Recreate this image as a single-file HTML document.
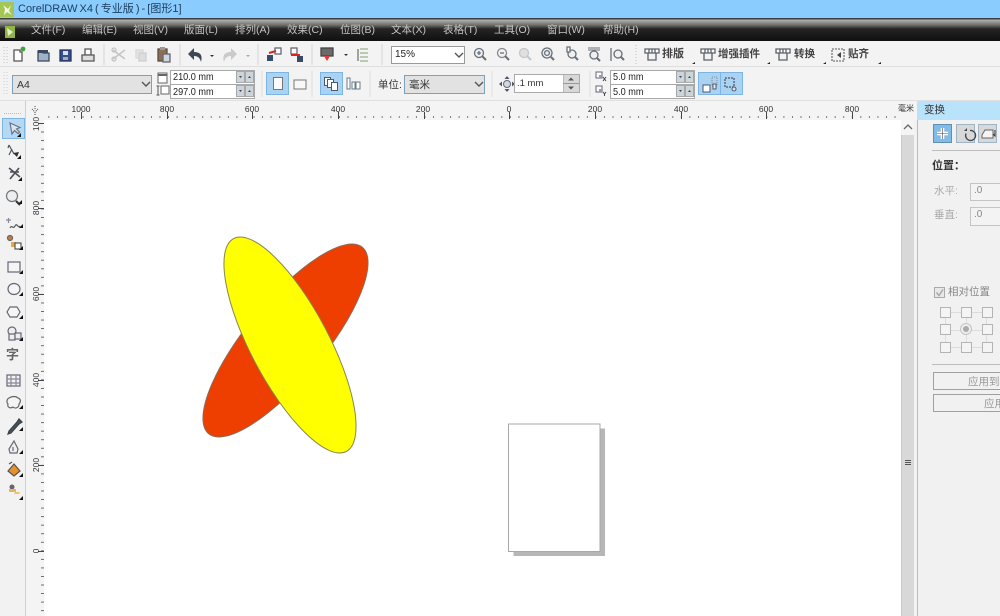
<!DOCTYPE html>
<html><head><meta charset="utf-8"><style>
html,body{margin:0;padding:0;width:1000px;height:616px;overflow:hidden;background:#fff}
#w{position:absolute;left:0;top:0;width:1000px;height:616px;overflow:hidden;filter:blur(.35px);font-family:"Liberation Sans","Noto Sans CJK SC",sans-serif;font-size:11px;color:#333}
#w div,#w span,#w svg{position:absolute;box-sizing:border-box}
.t{white-space:nowrap;line-height:14px}
.m{color:#c4c4c4;top:23px;font-size:10.5px}
.bx{background:#fff;border:1px solid #a0a0a0}
.sel{background:#a9d2f3;border:1px solid #7db5e2}
.n{font-size:10.5px;color:#222;transform:scaleX(.87);transform-origin:0 50%}
.r{font-size:8.5px;top:102px;color:#333;transform:translateX(-50%)}
.rv{font-size:8.5px;left:36px;color:#333;transform:translate(-50%,-50%) rotate(-90deg)}
.d{color:#aaa}
.g{width:11px;height:11px;border:1px solid #b4b4b4;background:#f4f4f4}
.b{font-weight:bold;color:#444;font-size:10.5px;top:47px}
</style></head><body><div id="w">
<div style="left:0;top:0;width:1000px;height:18px;background:#8accfe"></div>
<svg style="left:0;top:2px" width="14" height="15"><rect width="14" height="15" fill="#a3c655"/><path d="M3 3l5 4 3-4-2 6 3 4-5-3-3 3 1-6z" fill="#f3f8e4"/></svg>
<div class="t" style="left:18px;top:2px;font-size:11px;word-spacing:-1px;color:#1c3d5c">CorelDRAW X4 ( 专业版 ) - [图形1]</div>

<div style="left:0;top:18px;width:1000px;height:23px;background:linear-gradient(#3c3f44 0,#3c3f44 1px,#b0b0ac 2px,#6e6e6a 7px,#242424 11px,#0f0f0f 23px)"></div>
<svg style="left:5px;top:26px" width="10" height="12"><rect width="10" height="12" fill="#8fb544"/><path d="M2 2l6 4-5 4z" fill="#e4f0c4"/></svg>
<span class="t m" style="left:31px">文件(F)</span><span class="t m" style="left:82px">编辑(E)</span><span class="t m" style="left:133px">视图(V)</span><span class="t m" style="left:184px">版面(L)</span><span class="t m" style="left:235px">排列(A)</span><span class="t m" style="left:287px">效果(C)</span><span class="t m" style="left:340px">位图(B)</span><span class="t m" style="left:391px">文本(X)</span><span class="t m" style="left:443px">表格(T)</span><span class="t m" style="left:494px">工具(O)</span><span class="t m" style="left:547px">窗口(W)</span><span class="t m" style="left:603px">帮助(H)</span>

<div style="left:0;top:41px;width:1000px;height:60px;background:#f3f3f3"></div>
<div style="left:0;top:66px;width:1000px;height:1px;background:#dedede"></div>
<div style="left:0;top:100px;width:1000px;height:1px;background:#e0e0e0"></div>

<svg style="left:0;top:41px" width="1000" height="26" fill="none" stroke-width="1.300">
<path d="M4 6v18M7 6v18" stroke="#ccc" stroke-dasharray="1 2"/>
<path d="M14 9h6v2h2v9h-8z" fill="#fff" stroke="#555"/><circle cx="23" cy="8" r="2.400" fill="#3da53a"/>
<path d="M38 10h4l1 2h6v8H38z" fill="#9fb2c6" stroke="#394a5e"/><path d="M38 9h10v3H38z" fill="#394a5e"/>
<rect x="60" y="9" width="11" height="11" fill="#33518f" stroke="#27355e"/><rect x="63" y="10" width="5" height="4" fill="#d8e0ee"/><rect x="63" y="16" width="5" height="3" fill="#aab"/>
<path d="M85 8h6v6h-6z" fill="#fff" stroke="#555"/><path d="M82 14h12v6H82z" fill="#ddd" stroke="#555"/>
<path d="M104 3v21" stroke="#dcdcdc"/>
<path d="M113 9l12 9M113 18l12-9" stroke="#c4c4c4" stroke-width="1.500"/><circle cx="114" cy="9" r="2" stroke="#c4c4c4"/><circle cx="114" cy="18" r="2" stroke="#c4c4c4"/>
<rect x="136" y="9" width="7" height="8" fill="#e4e4e4" stroke="#d8d8d8"/><rect x="139" y="12" width="7" height="8" fill="#ddd" stroke="#d0d0d0"/>
<rect x="158" y="8" width="9" height="12" fill="#8a6f55" stroke="#5f4c3b"/><rect x="163" y="13" width="7" height="8" fill="#cfd6dc" stroke="#667"/><rect x="160" y="6" width="5" height="3" fill="#999"/>
<path d="M180 3v21" stroke="#dcdcdc"/>
<path d="M188 13l6-6v4c6 0 9 3 7 10-1-4-3-6-7-6v4z" fill="#3f4956"/><path d="M210 14h4l-2 2z" fill="#333"/>
<path d="M237 13l-6-6v4c-6 0-9 3-7 10 1-4 3-6 7-6v4z" fill="#cacaca"/><path d="M246 14h4l-2 2z" fill="#aaa"/>
<path d="M258 3v21" stroke="#dcdcdc"/>
<rect x="267" y="14" width="6" height="6" fill="#3a4a6a"/><rect x="275" y="7" width="6" height="6" fill="#fff" stroke="#667"/><path d="M269 12l7-2" stroke="#d22" stroke-width="2"/>
<rect x="291" y="7" width="6" height="6" fill="#fff" stroke="#667"/><rect x="297" y="15" width="6" height="6" fill="#3a4a6a"/><path d="M291 14h9" stroke="#d22" stroke-width="2"/>
<path d="M312 3v21" stroke="#dcdcdc"/>
<rect x="321" y="7" width="12" height="8" fill="#6a6a6a" stroke="#444"/><path d="M324 15h6l-3 5z" fill="#e33"/><path d="M344 13h4l-2 2z" fill="#333"/>
<path d="M360 8h8M360 12h8M360 16h8M360 20h8" stroke="#9ab08a" stroke-width="1.300"/><path d="M358 8v12" stroke="#777"/>
<path d="M382 3v21" stroke="#dcdcdc"/>
<g stroke="#6a7078"><circle cx="479" cy="12" r="4.500" fill="#eaf0f5"/><path d="M482 15l4 4" stroke-width="2"/><path d="M477 12h4M479 10v4"/>
<circle cx="502" cy="12" r="4.500" fill="#f2f2f2" stroke="#888"/><path d="M505 15l4 4" stroke-width="2"/><path d="M500 12h4"/></g>
<g stroke="#c4c8c8"><circle cx="524" cy="12" r="4.500" fill="#e0e0e0"/><path d="M527 15l4 4" stroke-width="2"/></g>
<g stroke="#6a7078"><circle cx="547" cy="12" r="5" fill="#eaeef2"/><circle cx="547" cy="12" r="2.400"/><path d="M551 16l3 3" stroke-width="2"/>
<circle cx="572" cy="13" r="4" fill="#f0f0f0"/><path d="M567 6h3v5h-3z" fill="#fff"/><path d="M575 16l3 3" stroke-width="2"/>
<circle cx="594" cy="14" r="4" fill="#f0f0f0"/><path d="M588 7h12M588 9h12" stroke-width="1"/><path d="M597 17l3 3" stroke-width="2"/>
<path d="M611 7v13"/><circle cx="618" cy="13" r="4" fill="#f0f0f0"/><path d="M621 16l3 3" stroke-width="2"/></g>
<path d="M636 4v19" stroke="#ccc" stroke-dasharray="1 2"/>
<g stroke="#5c6268"><path d="M645 8h14v4h-14z" fill="#fff"/><path d="M648 12v7h8v-7M649 8v4M652 8v4M655 8v4"/>
<path d="M701 8h14v4h-14z" fill="#fff"/><path d="M704 12v7h8v-7M705 8v4M708 8v4M711 8v4"/>
<path d="M776 8h14v4h-14z" fill="#fff"/><path d="M779 12v7h8v-7M780 8v4M783 8v4M786 8v4"/></g>
<rect x="832" y="8" width="12" height="12" stroke="#777" stroke-dasharray="2 1"/><path d="M841 11l-4 3 4 3z" fill="#444"/>
<path d="M692 23l3-2v2zM767 23l3-2v2zM823 23l3-2v2zM878 23l3-2v2z" fill="#222"/>
</svg>
<div class="bx" style="left:391px;top:46px;width:74px;height:18px;border-color:#999"></div>
<span class="t" style="left:395px;top:48px;color:#222;font-size:10px">15%</span>
<svg style="left:454px;top:51px" width="10" height="8" fill="none"><path d="M1 2l4 4 4-4" stroke="#555" stroke-width="1.400"/></svg>
<span class="t b" style="left:662px;font-size:11px">排版</span>
<span class="t b" style="left:718px">增强插件</span>
<span class="t b" style="left:794px">转换</span>
<span class="t b" style="left:848px">贴齐</span>

<svg style="left:0;top:67px" width="1000" height="34" fill="none">
<path d="M4 5v24M7 5v24" stroke="#ccc" stroke-dasharray="1 2"/>
<rect x="158" y="6" width="9" height="10" fill="#fff" stroke="#666"/><path d="M158 8h9" stroke="#666" stroke-width="2"/>
<path d="M158 19v9M156.500 19h3M156.500 28h3" stroke="#555"/><rect x="161" y="19" width="8" height="8" fill="#fff" stroke="#666"/>
<path d="M262 4v26M312 4v26M370 4v26M492 4v26M590 4v26" stroke="#dcdcdc"/>
<rect x="294" y="13" width="12" height="9" fill="#f8f8f8" stroke="#777"/>
<path d="M347 11h3v11h-3zM352 15h3v7h-3zM356 15h4v7h-4z" stroke="#6a7a8a" fill="#fff"/>
<circle cx="507" cy="17" r="3.500" fill="#cfd8e4" stroke="#667"/><path d="M507 9l-2.500 3h5zM507 25l-2.500-3h5zM499 17l3-2.500v5zM515 17l-3-2.500v5z" fill="#556"/>
<rect x="596" y="5" width="6" height="6" fill="#fff" stroke="#667"/><rect x="599" y="8" width="3" height="3" fill="#99a"/><path d="M603 10l3 4M606 10l-3 4" stroke="#445"/>
<rect x="596" y="19" width="6" height="6" fill="#fff" stroke="#667"/><rect x="599" y="22" width="3" height="3" fill="#99a"/><path d="M603 25l1.500 2 1.500-2M604.500 27v2" stroke="#445"/>
</svg>
<div style="left:12px;top:75px;width:140px;height:19px;background:#e2e2e2;border:1px solid #7f9fba"></div>
<span class="t" style="left:17px;top:78px;color:#333;font-size:10.5px">A4</span>
<svg style="left:141px;top:80px" width="10" height="8" fill="none"><path d="M1 2l4 4 4-4" stroke="#555" stroke-width="1.400"/></svg>

<div style="left:170px;top:70px;width:85px;height:29px;background:#fff;border:1px solid #a8a8a8"></div>
<div style="left:170px;top:84px;width:85px;height:1px;background:#a8a8a8"></div>
<span class="t n" style="left:173px;top:70px">210.0 mm</span>
<span class="t n" style="left:173px;top:85px">297.0 mm</span>
<svg style="left:236px;top:71px" width="18" height="27"><g fill="#cbd5da" stroke="#a8a8a8"><rect x=".5" y=".5" width="8" height="11"/><rect x="9.500" y=".5" width="8" height="11"/><rect x=".5" y="14.500" width="8" height="11"/><rect x="9.500" y="14.500" width="8" height="11"/></g><path d="M3 5h3l-1.500 2zM12 7h3l-1.500-2zM3 19h3l-1.500 2zM12 21h3l-1.500-2z" fill="#445"/></svg>

<div class="sel" style="left:266px;top:72px;width:23px;height:23px"></div><div style="left:273px;top:77px;width:10px;height:13px;background:#fafafa;border:1px solid #777"></div>
<div class="sel" style="left:320px;top:72px;width:23px;height:23px"></div>
<svg style="left:323px;top:76px" width="17" height="16" fill="none" stroke="#4a5a6c"><rect x="1.500" y="1.500" width="6" height="8" fill="#fff"/><rect x="4.500" y="3.500" width="6" height="8" fill="#fff"/><rect x="8.500" y="6.500" width="6" height="8" fill="#fff"/></svg>

<span class="t" style="left:378px;top:78px;color:#333;font-size:10.5px">单位:</span>
<div style="left:404px;top:75px;width:81px;height:19px;background:#e2e2e2;border:1px solid #7f9fba"></div>
<span class="t" style="left:409px;top:78px;color:#333;font-size:10.5px">毫米</span>
<svg style="left:474px;top:80px" width="10" height="8" fill="none"><path d="M1 2l4 4 4-4" stroke="#555" stroke-width="1.400"/></svg>

<div class="bx" style="left:514px;top:74px;width:66px;height:19px;border-color:#aaa"></div>
<span class="t" style="left:517px;top:77px;font-size:9.5px;color:#333">.1 mm</span>
<div style="left:563px;top:75px;width:16px;height:17px;background:#d8d8d8;border-left:1px solid #bbb"></div>
<div style="left:563px;top:83px;width:16px;height:1px;background:#999"></div>
<svg style="left:566px;top:76px" width="10" height="16"><path d="M5 1.500l3 3H2zM5 13.500l3-3H2z" fill="#555"/></svg>

<div style="left:610px;top:70px;width:85px;height:29px;background:#fff;border:1px solid #a8a8a8"></div>
<div style="left:610px;top:84px;width:85px;height:1px;background:#a8a8a8"></div>
<span class="t n" style="left:613px;top:70px">5.0 mm</span>
<span class="t n" style="left:613px;top:85px">5.0 mm</span>
<svg style="left:676px;top:71px" width="18" height="27"><g fill="#cbd5da" stroke="#a8a8a8"><rect x=".5" y=".5" width="8" height="11"/><rect x="9.500" y=".5" width="8" height="11"/><rect x=".5" y="14.500" width="8" height="11"/><rect x="9.500" y="14.500" width="8" height="11"/></g><path d="M3 5h3l-1.500 2zM12 7h3l-1.500-2zM3 19h3l-1.500 2zM12 21h3l-1.500-2z" fill="#445"/></svg>

<div class="sel" style="left:698px;top:72px;width:23px;height:23px"></div><div class="sel" style="left:720px;top:72px;width:23px;height:23px"></div>
<svg style="left:698px;top:72px" width="45" height="23" fill="none" stroke="#4a5a6c"><rect x="5" y="13" width="7" height="7" fill="#fff"/><rect x="14" y="5" width="5" height="9" stroke-dasharray="1 1" stroke="#889"/><rect x="15" y="12" width="3" height="5" fill="#eee"/><rect x="27" y="6" width="9" height="9" stroke-dasharray="2 1" stroke-width="1.300"/><circle cx="36" cy="17" r="2" fill="#dde"/></svg>

<!-- Rulers -->
<div style="left:0;top:101px;width:917px;height:19px;background:#f4f4f4"></div>
<div style="left:44px;top:116px;width:857px;height:2px;background:linear-gradient(90deg,#777 0,#777 1px,transparent 1px) 4.400px 0/8.560px 100%"></div>
<div style="left:26px;top:120px;width:18px;height:496px;background:#f4f4f4"></div>
<div style="left:25px;top:101px;width:1px;height:515px;background:#cfcfcf"></div>
<div style="left:0;top:101px;width:25px;height:515px;background:#f2f2f2"></div>
<div style="left:41px;top:123px;width:3px;height:493px;background:linear-gradient(180deg,#666 0,#666 1px,transparent 1px) 0 0/100% 8.560px"></div>
<svg style="left:26px;top:101px" width="891" height="19"><g stroke="#444"><path d="M55.500 11v7M141.500 11v7M226.500 11v7M312.500 11v7M398.500 11v7M483.500 11v7M569.500 11v7M655.500 11v7M740.500 11v7M826.500 11v7"/></g><path d="M6 8l3 3M12 8l-3 3M9 5v3M9 11v3" stroke="#444" stroke-dasharray="1 1"/></svg>
<svg style="left:26px;top:120px" width="18" height="496"><g stroke="#445"><path d="M12 3.500h6M12 88.500h6M12 174.500h6M12 260.500h6M12 345.500h6M12 431.500h6M12 517.500h6"/></g></svg>
<span class="t r" style="left:81px">1000</span><span class="t r" style="left:167px">800</span><span class="t r" style="left:252px">600</span><span class="t r" style="left:338px">400</span><span class="t r" style="left:423px">200</span><span class="t r" style="left:509px">0</span><span class="t r" style="left:595px">200</span><span class="t r" style="left:681px">400</span><span class="t r" style="left:766px">600</span><span class="t r" style="left:852px">800</span>
<span class="t" style="left:898px;top:102px;font-size:8px;color:#333">毫米</span>
<span class="t rv" style="top:124px">100</span><span class="t rv" style="top:208px">800</span><span class="t rv" style="top:294px">600</span><span class="t rv" style="top:380px">400</span><span class="t rv" style="top:465px">200</span><span class="t rv" style="top:551px">0</span>

<!-- Left toolbox -->
<div style="left:4px;top:113px;width:17px;height:1px;border-top:1px dotted #bbb"></div>
<div class="sel" style="left:2px;top:118px;width:23px;height:21px;background:#b5d8f5"></div>
<svg style="left:0;top:118px" width="25" height="392" fill="none" stroke="#555" stroke-width="1.200">
<path d="M10 5l2 11 2.500-3.500 3.500 3 1.500-1.500-3-3 3.500-1.500z" fill="#dbe6f1" stroke="#6a7684"/>
<path d="M9 27l5 9M9 27l-1 3M12 31l-3 6" stroke="#4f5760"/><path d="M13 35l6-1-2 5z" fill="#333" stroke="none"/>
<path d="M9 50l11 9M19 50l-9 11M10 54h9" stroke="#4a4f54" stroke-width="1.600"/>
<circle cx="12" cy="78" r="5.500" fill="#eee" stroke="#70767c"/><path d="M16 83l4 4" stroke="#333" stroke-width="2"/>
<path d="M6 102l5 0M8.500 100v5" stroke="#889"/><path d="M10 110c2-4 3 2 5-2s3 3 5 0" stroke="#555"/>
<circle cx="10" cy="120" r="2.500" fill="#c08040" stroke="#666"/><rect x="11" y="124" width="5" height="5" fill="#e8a550" stroke="none"/><rect x="15" y="125" width="6" height="6" fill="#fff" stroke="#555"/>
<rect x="8" y="144" width="12" height="10" fill="#f5f5f5" stroke="#667"/>
<ellipse cx="14" cy="171" rx="6" ry="5.500" fill="#f5f5f5" stroke="#667"/>
<path d="M10 189h7l3 5-3 5h-7l-3-5z" fill="#f5f5f5" stroke="#667"/>
<circle cx="12" cy="213" r="4" fill="#eee" stroke="#667"/><rect x="9" y="216" width="6" height="6" fill="#eee" stroke="#667"/><rect x="15" y="215" width="6" height="6" fill="#eee" stroke="#667"/>
<rect x="7" y="257" width="13" height="11" fill="#f2f2f2" stroke="#667"/><path d="M7 261h13M7 265h13M11 257v11M16 257v11" stroke="#889"/>
<path d="M9 280c3-2 7-2 9 0 3 1 3 4 1 6 0 4-4 5-6 3-3 2-6 0-5-3-2-2-1-5 1-6z" fill="#f4f4f4" stroke="#666"/>
<path d="M19 301l-2 3-8 9-1 3 3-1 8-9 3-2z" fill="#4a525c" stroke="#3a4048"/>
<path d="M14 323l4 8-1 4h-7l-1-4z" fill="#f0f0f0" stroke="#667"/><path d="M13 333v-4" stroke="#667"/>
<path d="M14 346l6 7-6 5-6-5z" fill="#e8902a" stroke="#555"/><path d="M9 346l3-2" stroke="#556"/>
<circle cx="12" cy="369" r="2.500" fill="#666" stroke="none"/><rect x="9" y="371" width="7" height="3" fill="#e6b45c" stroke="none"/><path d="M14 376l5 0 1-2-5 0z" fill="#f0c46a" stroke="none"/>
<g fill="#111" stroke="none"><path d="M17 19h4v-4zM17 41h4v-4zM18 63h4v-4zM18 86h4v-4zM19 110h4v-4zM19 132h4v-4zM19 156h4v-4zM19 178h4v-4zM19 201h4v-4zM19 223h4v-4zM19 291h4v-4zM19 313h4v-4zM19 336h4v-4zM19 359h4v-4zM19 382h4v-4z"/></g>
</svg>
<span class="t" style="left:6px;top:348px;font-size:13px;font-weight:bold;color:#666">字</span>

<!-- Canvas -->
<svg style="left:44px;top:120px" width="857" height="496">
<g transform="translate(-44,-120)">
<rect x="513.500" y="428.500" width="91.500" height="127.500" fill="#b6b6b6"/>
<rect x="508.500" y="424" width="91.500" height="127.500" fill="#fff" stroke="#a8a8a8"/>
<ellipse cx="285.500" cy="340.500" rx="39" ry="120.800" transform="rotate(39.500 285.500 340.500)" fill="#ef3f00" stroke="#8a6a5a" stroke-width="1"/>
<ellipse cx="290" cy="345" rx="39" ry="120.400" transform="rotate(-27.900 290 345)" fill="#ffff00" stroke="#85855a" stroke-width="1"/>
</g></svg>

<!-- Scrollbar -->
<div style="left:901px;top:120px;width:13px;height:496px;background:#d8d8d8;border-left:1px solid #c8c8c8"></div>
<div style="left:901px;top:120px;width:13px;height:15px;background:#f5f5f5"></div>
<svg style="left:903px;top:124px" width="10" height="7" fill="none"><path d="M1 5l4-4 4 4" stroke="#666" stroke-width="1.300"/></svg>
<div style="left:905px;top:460px;width:6px;height:5px;border-top:1px solid #555;border-bottom:1px solid #555"></div>
<div style="left:905px;top:462px;width:6px;height:1px;background:#555"></div>
<div style="left:914px;top:120px;width:3px;height:496px;background:#f2f2f2"></div>

<!-- Docker -->
<div style="left:917px;top:120px;width:83px;height:496px;background:#f1f1f1;border-left:1px solid #bcbcbc"></div>
<div style="left:917px;top:101px;width:83px;height:19px;background:#b9e2fb"></div>
<span class="t" style="left:924px;top:103px;color:#333;font-size:10.5px">变换</span>
<div style="left:933px;top:124px;width:19px;height:19px;background:#82bce6;border:1px solid #5f8fb5"></div>
<div style="left:956px;top:124px;width:19px;height:19px;background:#d8d8d8;border:1px solid #9fb4c4"></div>
<div style="left:978px;top:124px;width:19px;height:19px;background:#d8d8d8;border:1px solid #9fb4c4"></div>
<svg style="left:933px;top:124px" width="67" height="19" fill="none"><path d="M9.500 4v11M4 9.500h11" stroke="#fff" stroke-width="3.500"/><path d="M9.500 4v11M4 9.500h11" stroke="#445" stroke-width=".6"/><path d="M37 6.500a5 5 0 1 1-4 3" stroke="#444" stroke-width="1.300"/><path d="M31 7l3 0 0-3z" fill="#444"/><path d="M49 11l3-5h8v8h-11z" fill="#f4f4f4" stroke="#666"/><path d="M62 6v6l-2-2" stroke="#333"/></svg>
<div style="left:932px;top:150px;width:68px;height:1px;background:#bdbdbd"></div>
<span class="t" style="left:932px;top:159px;font-weight:bold;font-size:11px;color:#333">位置：</span>
<span class="t d" style="left:934px;top:184px;font-size:10.5px">水平:</span>
<span class="t d" style="left:934px;top:208px;font-size:10.5px">垂直:</span>
<div style="left:970px;top:183px;width:40px;height:18px;border:1px solid #c4c4c4;background:#f3f3f3"></div>
<div style="left:970px;top:207px;width:40px;height:19px;border:1px solid #c4c4c4;background:#f3f3f3"></div>
<span class="t d" style="left:974px;top:184px;font-size:10px;color:#888">.0</span>
<span class="t d" style="left:974px;top:208px;font-size:10px;color:#888">.0</span>
<div style="left:934px;top:287px;width:11px;height:11px;border:1px solid #aaa;background:#e8e8e8"></div>
<svg style="left:934px;top:287px" width="11" height="11" fill="none"><path d="M2.500 5.500l2.500 3 4-6" stroke="#aaa" stroke-width="1.500"/></svg>
<span class="t" style="left:948px;top:285px;color:#888;font-size:10.5px">相对位置</span>
<div style="left:945px;top:312px;width:42px;height:36px;border:1px solid #dcdcdc"></div>
<div style="left:945px;top:330px;width:42px;height:1px;background:#dcdcdc"></div>
<div style="left:966px;top:312px;width:1px;height:36px;background:#dcdcdc"></div>
<div class="g" style="left:940px;top:307px"></div><div class="g" style="left:961px;top:307px"></div><div class="g" style="left:982px;top:307px"></div>
<div class="g" style="left:940px;top:324px"></div><div class="g" style="left:982px;top:324px"></div>
<div class="g" style="left:940px;top:342px"></div><div class="g" style="left:961px;top:342px"></div><div class="g" style="left:982px;top:342px"></div>
<div style="left:960px;top:323px;width:12px;height:12px;border-radius:50%;background:#eee;border:1px solid #c4c4c4"></div>
<div style="left:963px;top:326px;width:6px;height:6px;border-radius:50%;background:#aaa"></div>
<div style="left:932px;top:364px;width:68px;height:1px;background:#bdbdbd"></div>
<div style="left:933px;top:372px;width:80px;height:18px;border:1px solid #a0a0a0;background:#f1f1f1"></div>
<div style="left:933px;top:394px;width:80px;height:18px;border:1px solid #a0a0a0;background:#f1f1f1"></div>
<span class="t d" style="left:968px;top:375px;font-size:10.5px;color:#999">应用到</span>
<span class="t d" style="left:984px;top:397px;font-size:10.5px;color:#999">应用</span>
</div></body></html>
